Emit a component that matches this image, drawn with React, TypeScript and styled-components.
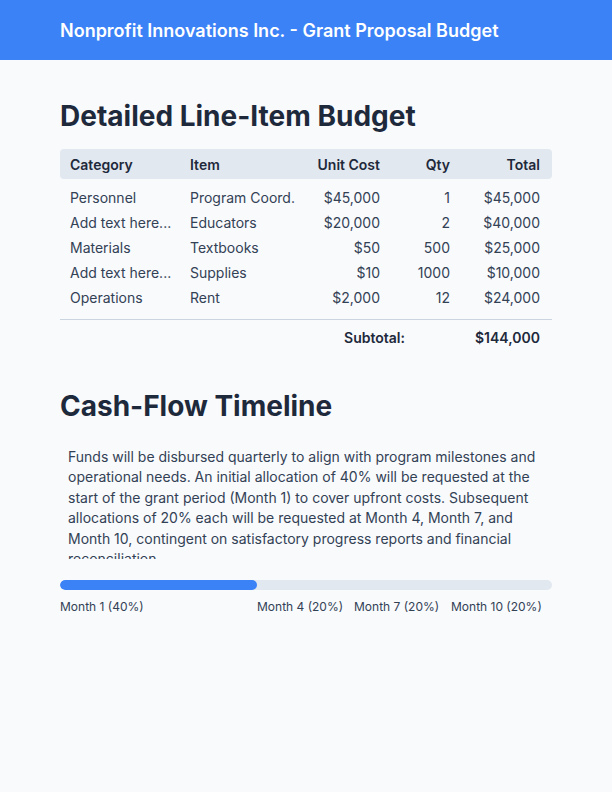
import React from 'react'
import styled, { createGlobalStyle } from 'styled-components'

const GlobalStyle = createGlobalStyle`
  html, body {
    margin: 0;
    padding: 0;
    background: #f8fafc;
    font-family: Inter, "Liberation Sans", sans-serif;
    color: #334155;
  }
`

const Page = styled.div`
  width: 612px;
  min-height: 792px;
  background: #f8fafc;
`

const TopBar = styled.header`
  height: 60px;
  background: #3b82f6;
  display: flex;
  align-items: center;
  padding: 0 60px;
`

const TopTitle = styled.h1`
  margin: 0;
  font-size: 18px;
  font-weight: 600;
  color: #ffffff;
`

const Main = styled.main`
  padding: 0 60px;
`

const SectionTitle = styled.h2<{ $top: number }>`
  margin: ${({ $top }) => $top}px 0 16px;
  font-size: 28px;
  line-height: 34px;
  font-weight: 700;
  color: #1e293b;
`

const Grid = styled.div`
  display: grid;
  grid-template-columns: 120px 110px 80px 70px 1fr;
  padding: 0 12px 0 10px;
  font-size: 14px;
`

const HeadRow = styled(Grid)`
  height: 30px;
  align-items: center;
  background: #e2e8f0;
  border-radius: 4px;
  font-weight: 600;
  color: #1e293b;
`

const Body = styled.div`
  padding: 6px 0 9px;
  border-bottom: 1px solid #cbd5e1;
`

const Row = styled(Grid)`
  height: 25px;
  align-items: center;
  color: #334155;
`

const Cell = styled.div<{ $num?: boolean }>`
  text-align: ${({ $num }) => ($num ? 'right' : 'left')};
  white-space: nowrap;
`

const SubtotalRow = styled.div`
  display: flex;
  justify-content: flex-end;
  align-items: center;
  height: 34px;
  padding-right: 12px;
  font-size: 14px;
  font-weight: 600;
  color: #1e293b;
`

const SubtotalValue = styled.span`
  min-width: 135px;
  text-align: right;
`

const Text = styled.p`
  margin: 0;
  height: 120px;
  box-sizing: border-box;
  padding: 8px 8px 0;
  overflow: hidden;
  font-size: 14px;
  line-height: 20.4px;
  color: #334155;
`

const Track = styled.div`
  margin-top: 21px;
  height: 10px;
  border-radius: 5px;
  background: #e2e8f0;
  overflow: hidden;
`

const Fill = styled.div`
  height: 100%;
  background: #3b82f6;
  border-radius: 5px;
`

const Labels = styled.div`
  display: grid;
  grid-template-columns: 197px 97px 97px 1fr;
  margin-top: 9px;
  font-size: 12px;
  line-height: 16px;
  color: #334155;
`

const rows = [
  ['Personnel', 'Program Coord.', '$45,000', '1', '$45,000'],
  ['Add text here...', 'Educators', '$20,000', '2', '$40,000'],
  ['Materials', 'Textbooks', '$50', '500', '$25,000'],
  ['Add text here...', 'Supplies', '$10', '1000', '$10,000'],
  ['Operations', 'Rent', '$2,000', '12', '$24,000'],
]

const milestones = ['Month 1 (40%)', 'Month 4 (20%)', 'Month 7 (20%)', 'Month 10 (20%)']

export default function App() {
  return (
    <Page>
      <GlobalStyle />
      <TopBar>
        <TopTitle>Nonprofit Innovations Inc. - Grant Proposal Budget</TopTitle>
      </TopBar>
      <Main>
        <SectionTitle $top={39}>Detailed Line-Item Budget</SectionTitle>
        <HeadRow>
          <Cell>Category</Cell>
          <Cell>Item</Cell>
          <Cell $num>Unit Cost</Cell>
          <Cell $num>Qty</Cell>
          <Cell $num>Total</Cell>
        </HeadRow>
        <Body>
          {rows.map((r, i) => (
            <Row key={i}>
              {r.map((c, j) => (
                <Cell key={j} $num={j >= 2}>{c}</Cell>
              ))}
            </Row>
          ))}
        </Body>
        <SubtotalRow>
          <span>Subtotal:</span>
          <SubtotalValue>$144,000</SubtotalValue>
        </SubtotalRow>

        <SectionTitle $top={35}>Cash-Flow Timeline</SectionTitle>
        <Text>
          Funds will be disbursed quarterly to align with program milestones and operational needs. An
          initial allocation of 40% will be requested at the start of the grant period (Month 1) to cover
          upfront costs. Subsequent allocations of 20% each will be requested at Month 4, Month 7, and
          Month 10, contingent on satisfactory progress reports and financial reconciliation.
        </Text>
        <Track>
          <Fill style={{ width: '40%' }} />
        </Track>
        <Labels>
          {milestones.map(m => (
            <span key={m}>{m}</span>
          ))}
        </Labels>
      </Main>
    </Page>
  )
}
